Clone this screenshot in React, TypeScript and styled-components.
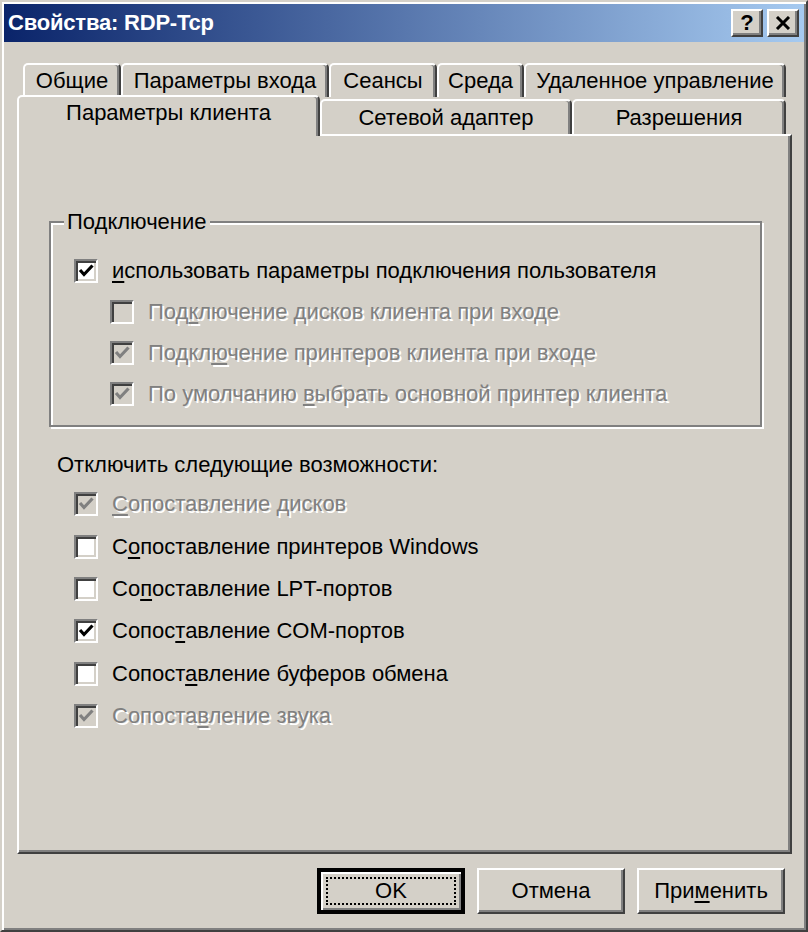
import React from "react";
import styled, { createGlobalStyle, css } from "styled-components";

const FACE = "#d4d0c8";
const SHADOW = "#808080";
const DARK = "#404040";

const GlobalStyle = createGlobalStyle`
  html, body {
    margin: 0;
    padding: 0;
    background: ${FACE};
  }
  body {
    font-family: "Liberation Sans", Arial, sans-serif;
    font-size: 22px;
    color: #000;
  }
`;

const Window = styled.div`
  box-sizing: border-box;
  width: 808px;
  height: 932px;
  display: flex;
  flex-direction: column;
  background: ${FACE};
  border: 2px solid;
  border-color: ${FACE} ${DARK} ${DARK} ${FACE};
  box-shadow: inset 2px 2px 0 #fff, inset -2px -2px 0 ${SHADOW};
  padding: 2px;
`;

const TitleBar = styled.div`
  height: 38px;
  flex: none;
  display: flex;
  align-items: center;
  justify-content: space-between;
  padding: 0 5px 0 4px;
  background: linear-gradient(to right, #0a246a, #a6caf0);
`;

const TitleText = styled.span`
  color: #fff;
  font-weight: bold;
  font-size: 22px;
  letter-spacing: -0.2px;
`;

const CaptionButtons = styled.div`
  display: flex;
  gap: 4px;
`;

const CaptionButton = styled.button`
  box-sizing: border-box;
  width: 32px;
  height: 28px;
  padding: 0;
  display: flex;
  align-items: center;
  justify-content: center;
  background: ${FACE};
  border: 2px solid;
  border-color: #fff ${DARK} ${DARK} #fff;
  box-shadow: inset -2px -2px 0 ${SHADOW};
  font-family: "Liberation Sans", Arial, sans-serif;
  font-weight: bold;
  font-size: 22px;
  line-height: 1;
  color: #000;
`;

const Body = styled.div`
  flex: 1;
  display: flex;
  flex-direction: column;
  padding: 21px 12px 16px 13px;
`;

const TabRow = styled.div<{ $front?: boolean }>`
  display: flex;
  align-items: flex-end;
  height: ${(p) => (p.$front ? 37 : 34)}px;
  padding: 0 4px 0 ${(p) => (p.$front ? 0 : 6)}px;
  position: relative;
  ${(p) => p.$front && "z-index: 1;"}
`;

const Tab = styled.div<{ $width: number; $selected?: boolean; $front?: boolean }>`
  box-sizing: border-box;
  width: ${(p) => p.$width}px;
  flex: none;
  display: flex;
  align-items: center;
  justify-content: center;
  background: ${FACE};
  border: 2px solid;
  border-bottom: none;
  border-color: #fff ${DARK} transparent #fff;
  box-shadow: inset -2px 0 0 ${SHADOW};
  border-radius: 5px 5px 0 0;
  font-size: 22px;
  white-space: nowrap;
  ${(p) =>
    p.$selected
      ? css`
          height: 41px;
          margin-bottom: -2px;
          padding-bottom: 8px;
          position: relative;
        `
      : css`
          height: ${p.$front ? 35 : 34}px;
          padding-bottom: ${p.$front ? 0 : 0}px;
        `}
`;

const Panel = styled.div`
  box-sizing: border-box;
  height: 720px;
  flex: none;
  display: flex;
  flex-direction: column;
  padding: 74px 24px 0 30px;
  border: 2px solid;
  border-color: #fff ${DARK} ${DARK} #fff;
  box-shadow: inset -2px -2px 0 ${SHADOW};
`;

const GroupBox = styled.fieldset`
  margin: 0;
  padding: 16px 0 13px 23px;
  width: 713px;
  box-sizing: border-box;
  height: 217px;
  border: 2px solid ${SHADOW};
  box-shadow: inset 2px 2px 0 #fff, 2px 2px 0 #fff;
  display: flex;
  flex-direction: column;
`;

const Legend = styled.legend`
  margin-left: -10px;
  padding: 0 3px;
  background: ${FACE};
  font-size: 22px;
  line-height: 24px;
`;

const SectionLabel = styled.div`
  margin: 26px 0 0 8px;
  height: 24px;
  line-height: 24px;
`;

const CheckList = styled.div`
  display: flex;
  flex-direction: column;
  padding: 6px 0 0 25px;
`;

const CheckRow = styled.label<{ $indent?: boolean; $height?: number }>`
  display: flex;
  align-items: center;
  gap: 14px;
  height: ${(p) => p.$height ?? 41}px;
  padding-left: ${(p) => (p.$indent ? 36 : 0)}px;
`;

const Box = styled.span<{ $disabled?: boolean }>`
  box-sizing: border-box;
  width: 24px;
  height: 24px;
  flex: none;
  display: flex;
  align-items: center;
  justify-content: center;
  background: ${(p) => (p.$disabled ? FACE : "#fff")};
  border: 2px solid;
  border-color: ${SHADOW} #fff #fff ${SHADOW};
  box-shadow: inset 2px 2px 0 ${DARK}, inset -2px -2px 0 ${FACE};
`;

const LabelText = styled.span<{ $disabled?: boolean }>`
  white-space: nowrap;
  ${(p) =>
    p.$disabled &&
    css`
      color: ${SHADOW};
      text-shadow: 2px 2px 0 #fff;
    `}
`;

const Accel = styled.span`
  text-decoration: underline;
  text-underline-offset: 3px;
  text-decoration-thickness: 2px;
`;

const ButtonBar = styled.div`
  display: flex;
  justify-content: flex-end;
  gap: 12px;
  margin-top: 14px;
  padding-right: 7px;
`;

const Button = styled.button<{ $default?: boolean }>`
  box-sizing: border-box;
  width: 148px;
  height: 46px;
  padding: 0;
  position: relative;
  background: ${FACE};
  font-family: "Liberation Sans", Arial, sans-serif;
  font-size: 22px;
  color: #000;
  border: 2px solid;
  border-color: #fff ${DARK} ${DARK} #fff;
  box-shadow: inset -2px -2px 0 ${SHADOW};
  ${(p) =>
    p.$default &&
    css`
      border-width: 4px;
      border-color: #000;
      box-shadow: inset 2px 2px 0 #fff, inset -2px -2px 0 ${SHADOW};
    `}
`;

const FocusRing = styled.span`
  position: absolute;
  inset: 5px;
  border: 2px dotted #000;
  display: flex;
  align-items: center;
  justify-content: center;
`;

const Check = ({ disabled }: { disabled?: boolean }) => (
  <svg width="18" height="18" viewBox="0 0 18 18">
    <polyline
      points="3,8 7,12.5 15.5,3.5"
      fill="none"
      stroke={disabled ? SHADOW : "#000"}
      strokeWidth="3.2"
    />
  </svg>
);

const accel = (text: string, at: number) => (
  <>
    {text.slice(0, at)}
    <Accel>{text[at]}</Accel>
    {text.slice(at + 1)}
  </>
);

type Option = {
  text: string;
  at: number;
  checked?: boolean;
  disabled?: boolean;
  indent?: boolean;
};

const connectionOptions: Option[] = [
  { text: "использовать параметры подключения пользователя", at: 0, checked: true },
  { text: "Подключение дисков клиента при входе", at: 3, disabled: true, indent: true },
  { text: "Подключение принтеров клиента при входе", at: 5, checked: true, disabled: true, indent: true },
  { text: "По умолчанию выбрать основной принтер клиента", at: 13, checked: true, disabled: true, indent: true },
];

const disableOptions: Option[] = [
  { text: "Сопоставление дисков", at: 0, checked: true, disabled: true },
  { text: "Сопоставление принтеров Windows", at: 1 },
  { text: "Сопоставление LPT-портов", at: 2 },
  { text: "Сопоставление COM-портов", at: 5, checked: true },
  { text: "Сопоставление буферов обмена", at: 6 },
  { text: "Сопоставление звука", at: 7, checked: true, disabled: true },
];

const CheckOption = ({ option, height }: { option: Option; height?: number }) => (
  <CheckRow $indent={option.indent} $height={height}>
    <Box $disabled={option.disabled}>
      {option.checked && <Check disabled={option.disabled} />}
    </Box>
    <LabelText $disabled={option.disabled}>{accel(option.text, option.at)}</LabelText>
  </CheckRow>
);

const backTabs = [
  { label: "Общие", width: 98 },
  { label: "Параметры входа", width: 208 },
  { label: "Сеансы", width: 108 },
  { label: "Среда", width: 87 },
  { label: "Удаленное управление", width: 262 },
];

const frontTabs = [
  { label: "Параметры клиента", width: 303, selected: true },
  { label: "Сетевой адаптер", width: 252 },
  { label: "Разрешения", width: 214 },
];

const App = () => (
  <>
    <GlobalStyle />
    <Window>
      <TitleBar>
        <TitleText>Свойства: RDP-Tcp</TitleText>
        <CaptionButtons>
          <CaptionButton aria-label="Справка">?</CaptionButton>
          <CaptionButton aria-label="Закрыть">
            <svg width="16" height="14" viewBox="0 0 16 14">
              <path d="M2 1 L14 13 M14 1 L2 13" stroke="#000" strokeWidth="3" />
            </svg>
          </CaptionButton>
        </CaptionButtons>
      </TitleBar>
      <Body>
        <TabRow>
          {backTabs.map((t) => (
            <Tab key={t.label} $width={t.width}>
              {t.label}
            </Tab>
          ))}
        </TabRow>
        <TabRow $front>
          {frontTabs.map((t) => (
            <Tab key={t.label} $width={t.width} $selected={t.selected} $front>
              {t.label}
            </Tab>
          ))}
        </TabRow>
        <Panel>
          <GroupBox>
            <Legend>Подключение</Legend>
            {connectionOptions.map((o) => (
              <CheckOption key={o.text} option={o} />
            ))}
          </GroupBox>
          <SectionLabel>Отключить следующие возможности:</SectionLabel>
          <CheckList>
            {disableOptions.map((o) => (
              <CheckOption key={o.text} option={o} height={42.4} />
            ))}
          </CheckList>
        </Panel>
        <ButtonBar>
          <Button $default>
            <FocusRing>OK</FocusRing>
          </Button>
          <Button>Отмена</Button>
          <Button>{accel("Применить", 3)}</Button>
        </ButtonBar>
      </Body>
    </Window>
  </>
);

export default App;
